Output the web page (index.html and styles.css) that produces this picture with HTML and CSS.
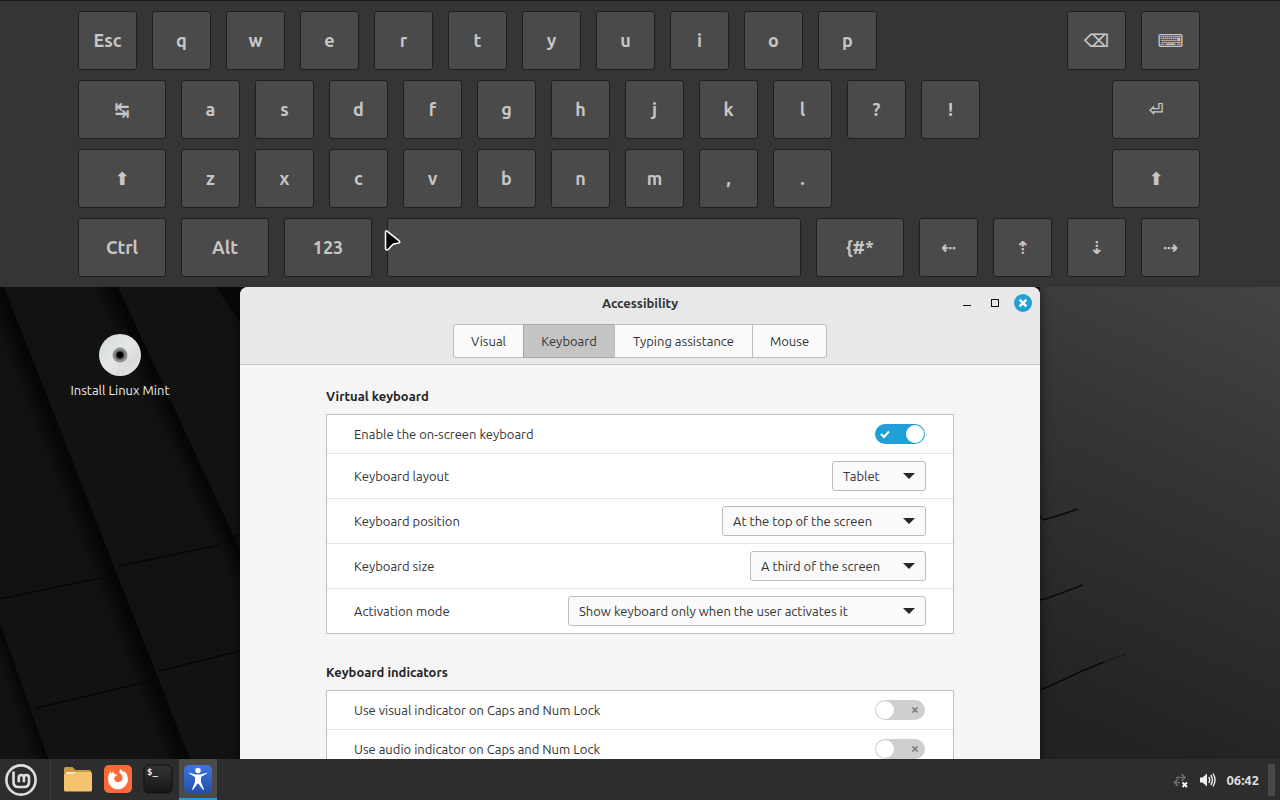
FILE: index.html
```html
<!DOCTYPE html>
<html lang="en">
<head>
<meta charset="utf-8">
<meta name="viewport" content="width=device-width, initial-scale=1">
<title>Accessibility</title>
<link rel="stylesheet" href="styles.css">
</head>
<body>
<section class="osk" aria-label="On-screen keyboard">
  <div class="osk-row">
    <button class="key">Esc</button><button class="key">q</button><button class="key">w</button><button class="key">e</button><button class="key">r</button><button class="key">t</button><button class="key">y</button><button class="key">u</button><button class="key">i</button><button class="key">o</button><button class="key">p</button>
    <button class="key symbol push" aria-label="Backspace">⌫</button><button class="key symbol" aria-label="Hide keyboard">⌨</button>
  </div>
  <div class="osk-row">
    <button class="key wide symbol" aria-label="Tab">↹</button><button class="key">a</button><button class="key">s</button><button class="key">d</button><button class="key">f</button><button class="key">g</button><button class="key">h</button><button class="key">j</button><button class="key">k</button><button class="key">l</button><button class="key">?</button><button class="key">!</button>
    <button class="key wide symbol push" aria-label="Enter">⏎</button>
  </div>
  <div class="osk-row">
    <button class="key wide symbol" aria-label="Left shift">⬆</button><button class="key">z</button><button class="key">x</button><button class="key">c</button><button class="key">v</button><button class="key">b</button><button class="key">n</button><button class="key">m</button><button class="key">,</button><button class="key">.</button>
    <button class="key wide symbol push" aria-label="Right shift">⬆</button>
  </div>
  <div class="osk-row">
    <button class="key wide">Ctrl</button><button class="key wide">Alt</button><button class="key wide">123</button><button class="key space" aria-label="Space"></button><button class="key wide">{#*</button><button class="key symbol" aria-label="Left">⇠</button><button class="key symbol" aria-label="Up">⇡</button><button class="key symbol" aria-label="Down">⇣</button><button class="key symbol" aria-label="Right">⇢</button>
  </div>
  <svg class="pointer" width="20" height="24" viewBox="0 0 20 24" aria-hidden="true"><path d="M2.500 3.200Q2.500 1 4.300 2.300L16.200 11.900Q17.600 13.500 15.600 14.100L10 15.300L5.200 20.400Q3 22 2.500 19.500Z" fill="#050505" stroke="#fff" stroke-width="1.500" stroke-linejoin="round"/></svg>
</section>

<main class="desktop">
  <svg class="wallpaper" viewBox="0 0 1280 472" preserveAspectRatio="none" aria-hidden="true">
    <defs>
      <linearGradient id="right" gradientUnits="userSpaceOnUse" x1="1280" y1="0" x2="1080" y2="440"><stop offset="0" stop-color="#444"/><stop offset=".4" stop-color="#353535"/><stop offset="1" stop-color="#222"/></linearGradient>
      <linearGradient id="s1" gradientUnits="userSpaceOnUse" x1="97" y1="236" x2="69" y2="247"><stop offset="0" stop-color="#050505"/><stop offset=".3" stop-color="#080808"/><stop offset="1" stop-color="#111" stop-opacity="0"/></linearGradient>
      <linearGradient id="s2" gradientUnits="userSpaceOnUse" x1="182" y1="137" x2="157" y2="149"><stop offset="0" stop-color="#050505"/><stop offset=".3" stop-color="#080808"/><stop offset="1" stop-color="#111" stop-opacity="0"/></linearGradient>
      <linearGradient id="s3" gradientUnits="userSpaceOnUse" x1="24" y1="404" x2="4" y2="411"><stop offset="0" stop-color="#050505"/><stop offset="1" stop-color="#111" stop-opacity="0"/></linearGradient>
    </defs>
    <rect width="1280" height="472" fill="#121212"/>
    <path d="M4 0L190 472H130L-50 0Z" fill="url(#s1)"/>
    <path d="M118 0L250 284V472H240L40 0Z" fill="url(#s2)"/>
    <path d="M0 336L48 472H0Z" fill="url(#s3)"/>
    <path d="M216 0H240V36Z" fill="#080808"/>
    <g fill="none" stroke="#070707" stroke-width="1.500"><path d="M0 312L105 290M119 279L215 259L240 247M36 421L155 393M159 384L240 364"/></g>
    <rect x="1040" width="240" height="472" fill="url(#right)"/>
    <g fill="none" stroke="#0a0a0a" stroke-width="1.400"><path d="M1038 228L1044 233L1060 228L1078 222M1040 313L1048 311L1083 298M1040 403L1048 400L1082 384L1104 375"/><path d="M1104 375L1126 367" stroke="#1b1b1b"/></g>
  </svg>

  <a class="launcher" href="#install">
    <svg width="44" height="44" viewBox="0 0 44 44" aria-hidden="true">
      <defs><linearGradient id="disc" x1="0" y1="0" x2="1" y2="1"><stop offset="0" stop-color="#d7d7d7"/><stop offset=".3" stop-color="#dce2e2"/><stop offset=".5" stop-color="#e6e6e6"/><stop offset=".7" stop-color="#dcdadd"/><stop offset="1" stop-color="#e5e5e5"/></linearGradient></defs>
      <circle cx="22" cy="22" r="21" fill="url(#disc)"/><circle cx="22" cy="22" r="7.500" fill="#8f8f8f"/><circle cx="22" cy="22" r="5" fill="#5a5a5a"/><circle cx="22" cy="22" r="3.300" fill="#000"/>
    </svg>
    <span>Install Linux Mint</span>
  </a>

  <section class="window" aria-labelledby="win-title">
    <header class="window-head">
      <div class="titlebar">
        <h1 id="win-title">Accessibility</h1>
        <div class="win-controls">
          <button aria-label="Minimize"><svg width="20" height="20" viewBox="0 0 20 20"><path d="M6 12.500H14" stroke="#111" fill="none"/></svg></button>
          <button aria-label="Maximize"><svg width="20" height="20" viewBox="0 0 20 20"><rect x="6.500" y="6.500" width="7" height="7" stroke="#111" fill="none"/></svg></button>
          <button aria-label="Close"><svg width="20" height="20" viewBox="0 0 20 20"><circle cx="10" cy="10" r="9" fill="#219fd9"/><path d="M6.600 6.600L13.400 13.400M13.400 6.600L6.600 13.400" stroke="#fff" stroke-width="2.400"/></svg></button>
        </div>
      </div>
      <nav class="tabs" role="tablist" aria-label="Sections">
        <button class="tab tab-s" role="tab" aria-selected="false">Visual</button>
        <button class="tab tab-m" role="tab" aria-selected="true">Keyboard</button>
        <button class="tab tab-l" role="tab" aria-selected="false">Typing assistance</button>
        <button class="tab tab-s" role="tab" aria-selected="false">Mouse</button>
      </nav>
    </header>
    <div class="settings">
      <section class="group">
        <h2>Virtual keyboard</h2>
        <div class="card">
          <div class="row row-switch"><label for="osk">Enable the on-screen keyboard</label>
            <span class="switch"><input type="checkbox" id="osk" role="switch" checked><svg class="mark-on" width="12" height="10" viewBox="0 0 12 10" aria-hidden="true"><path d="M2 5L5 8L10 2.500" fill="none" stroke="#fff" stroke-width="2"/></svg></span></div>
          <div class="row"><label for="layout">Keyboard layout</label><span class="drop drop-s"><select id="layout"><option>Tablet</option></select></span></div>
          <div class="row"><label for="position">Keyboard position</label><span class="drop drop-l"><select id="position"><option>At the top of the screen</option></select></span></div>
          <div class="row"><label for="size">Keyboard size</label><span class="drop drop-m"><select id="size"><option>A third of the screen</option></select></span></div>
          <div class="row"><label for="mode">Activation mode</label><span class="drop drop-xl"><select id="mode"><option>Show keyboard only when the user activates it</option></select></span></div>
        </div>
      </section>
      <section class="group">
        <h2>Keyboard indicators</h2>
        <div class="card">
          <div class="row row-switch"><label for="visual">Use visual indicator on Caps and Num Lock</label>
            <span class="switch"><input type="checkbox" id="visual" role="switch"><svg class="mark-off" width="8" height="8" viewBox="0 0 8 8" aria-hidden="true"><path d="M1.500 1.500L6.500 6.500M6.500 1.500L1.500 6.500" stroke="#777" stroke-width="1.600"/></svg></span></div>
          <div class="row row-switch"><label for="audio">Use audio indicator on Caps and Num Lock</label>
            <span class="switch"><input type="checkbox" id="audio" role="switch"><svg class="mark-off" width="8" height="8" viewBox="0 0 8 8" aria-hidden="true"><path d="M1.500 1.500L6.500 6.500M6.500 1.500L1.500 6.500" stroke="#777" stroke-width="1.600"/></svg></span></div>
        </div>
      </section>
    </div>
  </section>
</main>

<footer class="panel">
  <button class="menu" aria-label="Menu"><svg width="34" height="34" viewBox="0 0 34 34"><circle cx="17" cy="17" r="14.600" fill="none" stroke="#dedede" stroke-width="2.600"/><path d="M9.500 8.500V19Q9.500 24 14.500 24H20Q25 24 25 19V14.800Q25 12 22.400 12Q19.900 12 19.900 14.800V19.200M19.900 14.800Q19.900 12 17.300 12Q14.800 12 14.800 14.800V19.200" fill="none" stroke="#dedede" stroke-width="2.600"/></svg></button>
  <div class="tasks">
    <button class="task" aria-label="Files"><svg width="30" height="30" viewBox="0 0 30 30"><path d="M1 4.500Q1 3 2.500 3H9.500L12.500 6H26.500Q28 6 28 7.500V12H1Z" fill="#c99b45"/><path d="M3 8H26V12H3Z" fill="#f6e6c8"/><path d="M1 11Q1 10 2 10H10.500L13.500 8H27.500Q29 8 29 9.500V26Q29 27.500 27.500 27.500H2.500Q1 27.500 1 26Z" fill="#f4c36b"/></svg></button>
    <button class="task" aria-label="Firefox"><svg width="30" height="30" viewBox="0 0 30 30"><rect x="1" y="1" width="28" height="28" rx="5" fill="#f96a38"/><path d="M5 15Q5 10.500 7.600 7.300L8.500 9.700L10 7.400L11.400 10.300L14.800 10.500L12.200 12.400Q10.300 14 11.700 16.400Q13.200 18.600 16 18.100Q20 17.200 19.500 13Q18.700 10.200 16.300 8.400Q16.500 6.500 17.600 4.900Q19 6.900 21 8.200L21.700 7.300Q25 11 25 15.500A10 10 0 0 1 5 15Z" fill="#fff"/></svg></button>
    <button class="task" aria-label="Terminal"><svg width="30" height="30" viewBox="0 0 30 30"><defs><linearGradient id="term" x1="0" y1="0" x2="0" y2="1"><stop offset="0" stop-color="#343434"/><stop offset="1" stop-color="#161616"/></linearGradient></defs><rect x="1" y="1" width="28" height="28" rx="5" fill="url(#term)" stroke="#101010"/><text x="4" y="11" class="prompt">$_</text></svg></button>
    <button class="task active" aria-label="Accessibility"><svg width="30" height="30" viewBox="0 0 30 30"><defs><linearGradient id="acc" x1="0" y1="0" x2="0" y2="1"><stop offset="0" stop-color="#3f75dc"/><stop offset="1" stop-color="#234fae"/></linearGradient></defs><rect x="1" y="1" width="28" height="28" rx="5" fill="url(#acc)"/><circle cx="15" cy="6.500" r="2.700" fill="#fff"/><path d="M5.800 9.300L6.200 8.700L12.500 10.400H17.500L23.800 8.700L24.200 9.300L18 13V18L21 25.600L20.200 26L15.300 19.500H14.700L9.800 26L9 25.600L12 18V13Z" fill="#fff"/></svg></button>
  </div>
  <div class="tray">
    <button aria-label="Network"><svg width="18" height="18" viewBox="0 0 18 18"><path d="M4 6.500H12M9.500 3L13 6.500L9.500 10M8 11.500H3M6 8L2.500 11.500L6 15" fill="none" stroke="#6a6a6a" stroke-width="1.700"/><path d="M10.500 11.500L15 16M15 11.500L10.500 16" stroke="#fff" stroke-width="1.800"/></svg></button>
    <button aria-label="Volume"><svg width="18" height="18" viewBox="0 0 18 18"><path d="M1 6.500H3.500L8 2.500V15.500L3.500 11.500H1Z" fill="#eee"/><path d="M9.700 6Q11.700 9 9.700 12M11.800 4Q15 9 11.800 14M14 2.500Q18 9 14 15.500" fill="none" stroke="#eee" stroke-width="1.400"/></svg></button>
    <time>06:42</time>
    <button class="show-desktop" aria-label="Show desktop"></button>
  </div>
</footer>
</body>
</html>
```
FILE: styles.css
```css
* { box-sizing: border-box; }

body {
  margin: 0;
  height: 100vh;
  display: flex;
  flex-direction: column;
  overflow: hidden;
  background: #111;
  color: #333;
  font: 13px/18px "Ubuntu", "Noto Sans", sans-serif;
}

button, select { font: inherit; color: inherit; }

button {
  display: flex;
  align-items: center;
  justify-content: center;
  margin: 0;
  padding: 0;
  border: 0;
  background: none;
}

h1, h2 { margin: 0; font-size: 13px; font-weight: 700; }

/* On-screen keyboard */
.osk {
  position: relative;
  display: flex;
  flex-direction: column;
  gap: 10px;
  padding: 10px 80px 10px 78px;
  border-top: 1px solid #1d1d1d;
  background: #353535;
}

.osk-row { display: flex; gap: 15px; }

.key {
  flex: none;
  width: 59px;
  height: 59px;
  padding-bottom: 2px;
  border: 1px solid #1f1f1f;
  border-radius: 3px;
  background: #4a4a4a;
  color: #c6c6c6;
  font-size: 18px;
  font-weight: 700;
}

.key.wide { width: 88px; }
.key.space { flex: 1; }
.key.push { margin-left: auto; }
.key.symbol { padding-bottom: 0; font-family: "DejaVu Sans", sans-serif; }

.pointer { position: absolute; left: 383px; top: 228px; }

/* Desktop */
.desktop {
  position: relative;
  flex: 1;
  min-height: 0;
  display: grid;
  grid-template-columns: 3fr 10fr 3fr;
  align-items: start;
  overflow: hidden;
}

.wallpaper { position: absolute; inset: 0; width: 100%; height: 100%; }

.launcher {
  position: relative;
  display: flex;
  flex-direction: column;
  align-items: center;
  gap: 4px;
  padding-top: 46px;
  color: #eee;
  text-decoration: none;
}

/* Settings window */
.window {
  position: relative;
  border-radius: 8px 8px 0 0;
  background: #f5f5f5;
  box-shadow: 0 2px 12px rgba(0, 0, 0, 0.6);
}

.window-head {
  padding-bottom: 6px;
  border-bottom: 1px solid #c8c8c8;
  border-radius: 8px 8px 0 0;
  background: #e8e8e8;
}

.titlebar {
  display: grid;
  grid-template-columns: 1fr auto 1fr;
  align-items: center;
  height: 32px;
  padding: 0 7px;
}

.titlebar h1 { grid-column: 2; }

.win-controls { display: flex; justify-content: flex-end; gap: 8px; }

.tabs { display: flex; justify-content: center; padding-top: 5px; }

.tab {
  height: 34px;
  margin-left: -1px;
  border: 1px solid #bcbcbc;
  background: #fafafa;
}

.tab-s { width: 74px; }
.tab:first-child { width: 71px; margin-left: 0; border-radius: 3px 0 0 3px; }
.tab:last-child { width: 75px; border-radius: 0 3px 3px 0; }
.tab-m { width: 92px; }
.tab-l { width: 139px; }
.tab[aria-selected="true"] { background: #c4c4c4; border-color: #a6a6a6; }

.settings {
  display: flex;
  flex-direction: column;
  gap: 29px;
  padding: 22px 86px 24px;
}

.group { display: flex; flex-direction: column; gap: 9px; }
.group h2 { color: #262626; }

.card { border: 1px solid #bfbfbf; background: #fff; }

.row {
  display: flex;
  align-items: center;
  justify-content: space-between;
  height: 45px;
  padding: 0 27px;
  border-bottom: 1px solid #e4e4e4;
}

.row:last-child { height: 44px; border-bottom: 0; }
.row-switch { height: 39px; padding-right: 28px; }
.row-switch:last-child { height: 38px; }

.drop { position: relative; display: flex; height: 30px; }

.drop::after {
  content: "";
  position: absolute;
  right: 11px;
  top: 12px;
  border: 6px solid transparent;
  border-top-color: #262626;
  border-bottom: 0;
  pointer-events: none;
}

.drop select {
  appearance: none;
  width: 100%;
  padding: 0 28px 0 10px;
  border: 1px solid #bcbcbc;
  border-radius: 3px;
  background: #fafafa;
}

.drop-s { width: 94px; }
.drop-m { width: 176px; }
.drop-l { width: 204px; }
.drop-xl { width: 358px; }

.switch { position: relative; display: flex; }

.switch input {
  appearance: none;
  display: flex;
  width: 50px;
  height: 20px;
  margin: 0;
  padding: 1px;
  border-radius: 10px;
  background: #cfcfcf;
}

.switch input::before {
  content: "";
  width: 18px;
  height: 18px;
  border-radius: 50%;
  background: #fff;
}

.switch input:checked { justify-content: flex-end; background: #219fd9; }
.mark-on, .mark-off { position: absolute; pointer-events: none; }
.mark-on { left: 4px; top: 5px; }
.mark-off { right: 6px; top: 6px; }

/* Panel */
.panel {
  flex: none;
  display: flex;
  height: 41px;
  background: #2d2d2d;
  color: #e2e2e2;
}

.menu {
  width: 51px;
  padding-right: 9px;
  border-right: 1px solid #404040;
}

.tasks { display: flex; gap: 2px; padding-left: 8px; }
.task { width: 38px; border-bottom: 2px solid transparent; }
.task.active { border-bottom-color: #219fd9; background: #4b4b4b; }
.prompt { font: 700 9px "DejaVu Sans Mono", monospace; fill: #eee; }

.tray {
  display: flex;
  align-items: center;
  gap: 9px;
  margin-left: auto;
  padding-right: 5px;
}

.tray time { font-weight: 700; }
.show-desktop { width: 7px; height: 32px; background: #484848; }
```
